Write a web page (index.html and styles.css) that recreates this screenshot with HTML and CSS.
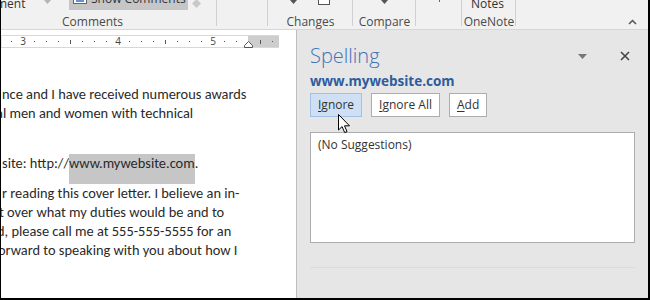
FILE: index.html
```html
<!DOCTYPE html>
<html>
<head>
	<meta charset="UTF-8">
	<title>Spelling</title>
	<link rel="stylesheet" href="styles.css">
</head>
<body>
	<div class="screen">
		<div class="ribbon">
			<div class="group g-comments">
				<div class="g-top">
					<span class="cut-word">ment</span>
					<svg class="tri tri-light" width="7" height="4" viewBox="0 0 7 4"><path d="M0 0h7L3.5 4z"/></svg>
					<span class="show-btn">
						<svg class="show-icon" width="14" height="5" viewBox="0 0 14 5"><rect x="0.5" y="-2" width="13" height="6.5" fill="#fff" stroke="#666"/><path d="M3 2h8" stroke="#2b6cc4" stroke-width="1.5"/></svg>
						<span>Show Comments</span>
					</span>
					<svg class="diamond" width="9" height="9" viewBox="0 0 9 9"><path d="M4.5 -1L9 3.5 4.5 8 0 3.5z"/></svg>
				</div>
				<div class="g-label">Comments</div>
			</div>
			<div class="group g-blank">
				<div class="g-top"></div>
				<div class="g-label"></div>
			</div>
			<div class="group g-changes">
				<div class="g-top">
					<svg class="tri tri-dark" width="7" height="4" viewBox="0 0 7 4"><path d="M0 0h7L3.5 4z"/></svg>
					<svg class="sq" width="12" height="5" viewBox="0 0 12 5"><rect x="0.5" y="-3" width="11" height="7.5" fill="#fff" stroke="#555"/></svg>
				</div>
				<div class="g-label">Changes</div>
			</div>
			<div class="group g-compare">
				<div class="g-top">
					<svg class="tri tri-dark" width="7" height="4" viewBox="0 0 7 4"><path d="M0 0h7L3.5 4z"/></svg>
				</div>
				<div class="g-label">Compare</div>
			</div>
			<div class="group g-small">
				<div class="g-top">
					<span class="tick"></span>
				</div>
				<div class="g-label"></div>
			</div>
			<div class="group g-onenote">
				<div class="g-top">
					<span class="cut-word notes">Notes</span>
				</div>
				<div class="g-label">OneNote</div>
			</div>
			<div class="ribbon-end">
				<svg width="9" height="6" viewBox="0 0 9 6"><path d="M1 5l3.5-3.5L8 5" fill="none" stroke="#555" stroke-width="1.5"/></svg>
			</div>
		</div>

		<div class="main">
			<div class="doc">
				<svg class="ruler" width="278" height="13" viewBox="0 0 278 13">
					<rect x="0" y="0.5" width="278" height="12" fill="#fff" stroke="#d8d8d8"/>
					<rect x="247" y="1" width="31" height="11" fill="#cdcdcd"/>
					<g fill="#555">
						<rect x="10" y="6" width="1" height="1"/>
						<rect x="33" y="6" width="1" height="1"/>
						<rect x="45" y="6" width="1" height="1"/>
						<rect x="57" y="6" width="1" height="1"/>
						<rect x="69" y="5" width="1" height="4"/>
						<rect x="81" y="6" width="1" height="1"/>
						<rect x="93" y="6" width="1" height="1"/>
						<rect x="105" y="6" width="1" height="1"/>
						<rect x="128" y="6" width="1" height="1"/>
						<rect x="140" y="6" width="1" height="1"/>
						<rect x="152" y="6" width="1" height="1"/>
						<rect x="164" y="5" width="1" height="4"/>
						<rect x="176" y="6" width="1" height="1"/>
						<rect x="188" y="6" width="1" height="1"/>
						<rect x="200" y="6" width="1" height="1"/>
						<rect x="223" y="6" width="1" height="1"/>
						<rect x="235" y="6" width="1" height="1"/>
						<rect x="259" y="5" width="1" height="4"/>
						<rect x="271" y="6" width="1" height="1"/>
					</g>
					<g class="ruler-num">
						<text x="22" y="10">3</text>
						<text x="117" y="10">4</text>
						<text x="212" y="10">5</text>
					</g>
					<path d="M243.5 12.5V10.5L247.5 6.5 251.5 10.5V12.5z" fill="#fff" stroke="#555"/>
				</svg>

				<div class="page">
					<div class="para">
						<div class="ln">nce and I have received numerous awards</div>
						<div class="ln cut-a">al men and women with technical</div>
						<div class="ln">&nbsp;</div>
					</div>
					<div class="para tight">
						<div class="ln">site: http://<span class="sel">www.mywebsite.com</span>.</div>
					</div>
					<div class="para">
						<div class="ln">r reading this cover letter. I believe an in-</div>
						<div class="ln cut-t">t over what my duties would be and to</div>
						<div class="ln cut-d">d, please call me at 555-555-5555 for an</div>
						<div class="ln cut-o">orward to speaking with you about how I</div>
					</div>
				</div>
			</div>

			<div class="pane">
				<div class="pane-head">
					<h1>Spelling</h1>
					<div class="pane-tools">
						<svg width="9" height="5" viewBox="0 0 9 5"><path d="M0 0h9L4.5 5z" fill="#777"/></svg>
						<svg width="10" height="10" viewBox="0 0 10 10"><path d="M1 1l8 8M9 1l-8 8" stroke="#444" stroke-width="1.6"/></svg>
					</div>
				</div>
				<div class="word">www.mywebsite.com</div>
				<div class="actions">
					<button class="btn hot"><u>I</u>gnore</button>
					<button class="btn"><u>I</u>gnore All</button>
					<button class="btn"><u>A</u>dd</button>
				</div>
				<div class="suggest">(No Suggestions)</div>
				<div class="divider"></div>

				<svg class="cursor" width="13" height="20" viewBox="0 0 13 20"><path d="M0.5 0.5V16l3.6-3.4 2.6 6 2.3-1-2.5-5.8h5z" fill="#fff" stroke="#000" stroke-linejoin="round"/></svg>
			</div>
		</div>
	</div>
</body>
</html>
```

FILE: styles.css
```css
*{
	margin: 0;
	padding: 0;
	box-sizing: border-box;
}
body{
	background: #fff;
}
.screen{
	width: 650px;
	height: 300px;
	display: flex;
	flex-direction: column;
	overflow: hidden;
	border-left: 1px solid #000;
	border-right: 2px solid #000;
	border-bottom: 2px solid #000;
	font-family: "Open Sans", "Noto Sans", sans-serif;
}

/* ribbon */
.ribbon{
	height: 30px;
	flex: none;
	display: flex;
	background: #f1f1f1;
	border-bottom: 1px solid #d6d6d6;
	color: #4a4a4a;
	font-size: 12px;
}
.group{
	height: 29px;
	flex: none;
	display: flex;
	flex-direction: column;
	background: linear-gradient(#d0d0d0, #d0d0d0) right top / 1px 26px no-repeat;
}
.g-comments{ width: 216px; }
.g-blank{ width: 51px; }
.g-changes{ width: 85px; }
.g-compare{ width: 63px; }
.g-small{ width: 46px; }
.g-onenote{ width: 54px; }
.g-top{
	height: 12px;
	display: flex;
	align-items: flex-end;
	overflow: hidden;
}
.g-label{
	height: 17px;
	line-height: 17px;
	text-align: center;
	padding-top: 1px;
	white-space: nowrap;
}
.g-comments .g-label{
	text-align: left;
	padding-left: 61px;
}
.cut-word{
	flex: none;
	width: 42px;
	margin-left: -5px;
	line-height: 14px;
	margin-bottom: 1px;
	color: #333;
}
.notes{
	margin-left: 9px;
	width: auto;
}
.tri{
	flex: none;
	margin-bottom: 8px;
}
.tri-light{
	fill: #b5b5b5;
	margin-left: 6px;
}
.tri-dark{
	fill: #555;
}
.g-changes .tri-dark{ margin-left: 22px; }
.g-compare .tri-dark{ margin-left: 28px; }
.show-btn{
	flex: none;
	width: 119px;
	height: 10px;
	margin-left: 18px;
	margin-bottom: 2px;
	display: flex;
	align-items: flex-end;
	overflow: hidden;
	background: #c6c6c6;
	padding-left: 4px;
	color: #333;
}
.show-icon{
	flex: none;
	margin-bottom: 6px;
}
.show-btn span{
	line-height: 14px;
	margin-left: 4px;
	margin-bottom: 4px;
	white-space: nowrap;
}
.diamond{
	flex: none;
	fill: #c9c9c9;
	margin-left: 4px;
	margin-bottom: 3px;
}
.sq{
	flex: none;
	margin-left: 21px;
	margin-bottom: 7px;
}
.tick{
	width: 1px;
	height: 2px;
	background: #666;
	margin-left: 23px;
	margin-bottom: 10px;
}
.ribbon-end{
	flex: 1;
	display: flex;
	justify-content: flex-end;
	align-items: flex-start;
	padding: 19px 11px 0 0;
}

/* document */
.main{
	flex: 1;
	display: flex;
	min-height: 0;
}
.doc{
	width: 296px;
	flex: none;
	background: #fff;
	border-right: 1px solid #bdbdbd;
	overflow: hidden;
}
.ruler{
	display: block;
	margin-top: 5px;
}
.ruler-num{
	font: 10px "Open Sans", sans-serif;
	fill: #444;
	text-anchor: middle;
}
.page{
	margin-top: 37px;
	padding-left: 1px;
	font: 14.4px/19px "Carlito", "Lato", sans-serif;
	color: #2a2a2a;
	white-space: nowrap;
}
.para{
	margin-bottom: 12px;
}
.para.tight{
	margin-bottom: 0;
}
.cut-a{ text-indent: -6px; }
.cut-t{ text-indent: -3px; }
.cut-d{ text-indent: -5px; }
.cut-o{ text-indent: -4px; }
.sel{
	display: inline-block;
	height: 30px;
	vertical-align: top;
	background: #c6c6c6;
}

/* spelling pane */
.pane{
	flex: 1;
	position: relative;
	display: flex;
	flex-direction: column;
	background: #e6e6e6;
	padding: 13px 13px 0 13px;
}
.pane-head{
	display: flex;
	align-items: center;
}
.pane-head h1{
	flex: 1;
	font-size: 20px;
	line-height: 26px;
	font-weight: 300;
	color: #3f72b7;
}
.pane-tools{
	display: flex;
	align-items: center;
	gap: 33px;
	margin-right: 5px;
}
.word{
	margin-top: 3px;
	font-size: 13.5px;
	line-height: 19px;
	font-weight: bold;
	color: #2d5c9d;
}
.actions{
	display: flex;
	gap: 9px;
	margin-top: 2px;
}
.btn{
	height: 24px;
	padding: 0 7px;
	font: 12px/22px "Open Sans", "Noto Sans", sans-serif;
	color: #333;
	background: #fff;
	border: 1px solid #adadad;
}
.btn.hot{
	background: #cfe0f4;
	border-color: #a3c0e5;
	padding: 0 7px;
}
.btn u{
	text-underline-offset: 2px;
}
.suggest{
	margin-top: 15px;
	height: 111px;
	background: #fff;
	border: 1px solid #acacac;
	padding: 3px 7px;
	font-size: 12px;
	line-height: 18px;
	color: #333;
}
.divider{
	margin-top: 24px;
	border-top: 1px solid #dcdcdc;
}
.cursor{
	position: absolute;
	left: 41px;
	top: 84px;
}
```
